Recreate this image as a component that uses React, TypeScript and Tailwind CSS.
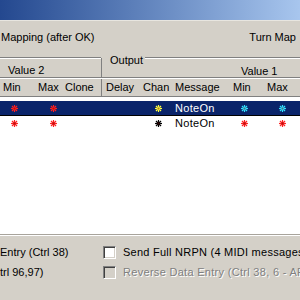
import React from "react";

const Star = ({ color, className = "" }: { color: string; className?: string }) => (
	<svg width="7" height="7" viewBox="0 0 7 7" className={className}>
		<g stroke={color} strokeWidth="1.2">
			<line x1="3.5" y1="0" x2="3.5" y2="7" />
			<line x1="0" y1="3.5" x2="7" y2="3.5" />
			<line x1="1" y1="1" x2="6" y2="6" />
			<line x1="6" y1="1" x2="1" y2="6" />
		</g>
		<rect x="2.5" y="2.5" width="2" height="2" fill="#600" opacity="0.5" />
	</svg>
);

const Etched = ({ className = "" }: { className?: string }) => (
	<div className={`h-[2px] border-t border-t-[#808080] border-b border-b-white ${className}`} />
);

const CheckBox = ({ disabled }: { disabled?: boolean }) => (
	<div
		className={`shrink-0 w-[13px] h-[13px] border-t border-l border-t-[#808080] border-l-[#808080] border-b border-r border-b-white border-r-white shadow-[inset_1px_1px_0_#404040,inset_-1px_-1px_0_#d4d0c8] ${
			disabled ? "bg-[#d4d0c8]" : "bg-white"
		}`}
	/>
);

const Row = ({ selected, chanColor, valColor }: { selected?: boolean; chanColor: string; valColor: string }) => (
	<div
		className={`flex items-center h-[14px] ${
			selected ? "bg-[#0a246a] text-white" : "text-black"
		}`}
	>
		<div className="w-[33px] flex">
			<Star color="#ff2020" className="ml-[11px]" />
		</div>
		<div className="w-[30px] flex">
			<Star color="#ff2020" className="ml-[17px]" />
		</div>
		<div className="w-[38px]" />
		<div className="w-[1px]" />
		<div className="w-[38px]" />
		<div className="w-[31px] flex">
			<Star color={chanColor} className="ml-[15px]" />
		</div>
		<div className="w-[57px] pl-[4px] leading-[14px] tracking-[0.3px]">NoteOn</div>
		<div className="w-[35px] flex">
			<Star color={valColor} className="ml-[13px]" />
		</div>
		<div className="w-[37px] flex">
			<Star color={valColor} className="ml-[16px]" />
		</div>
	</div>
);

export default function App() {
	return (
		<div className="w-[300px] h-[300px] overflow-hidden bg-[#d4d0c8] text-[11px] leading-[13px] text-black font-['Liberation_Sans',Arial,sans-serif] flex flex-col">
			{/* Title bar */}
			<div className="h-[20px] shrink-0 bg-gradient-to-r from-[#24488f] to-[#a8c6ee]" />
			<div className="h-[1px] bg-[#e8e6e0]" />

			{/* Options line */}
			<div className="flex justify-between items-start pt-[10px] h-[36px] shrink-0">
				<span className="pl-[1px]">Mapping (after OK)</span>
				<span className="pr-[4px]">Turn Map</span>
			</div>

			{/* Header row 1 */}
			<div className="flex h-[20px] shrink-0">
				<div className="w-[101px] flex flex-col">
					<Etched />
					<span className="pl-[8px] pt-[5px]">Value 2</span>
				</div>
				<div className="w-[1px] bg-[#808080] mt-[1px]" />
				<div className="flex-1 relative flex flex-col">
					<Etched className="ml-[43px]" />
					<span className="absolute left-[7px] top-[-3px] px-[1px]">Output</span>
					<span className="ml-[139px] pt-[6px]">Value 1</span>
				</div>
			</div>

			{/* Header row 2 */}
			<Etched />
			<div className="flex h-[17px] shrink-0 items-center">
				<div className="w-[33px] pl-[3px]">Min</div>
				<div className="w-[30px] pl-[5px]">Max</div>
				<div className="w-[38px] pl-[2px]">Clone</div>
				<div className="w-[1px] h-full bg-[#808080]" />
				<div className="w-[38px] pl-[4px]">Delay</div>
				<div className="w-[31px] pl-[3px]">Chan</div>
				<div className="w-[57px] pl-[4px]">Message</div>
				<div className="w-[35px] pl-[5px]">Min</div>
				<div className="w-[37px] pl-[4px]">Max</div>
			</div>
			<Etched />

			{/* List */}
			<div className="h-[136px] shrink-0 bg-white pt-[3px] flex flex-col">
				<div className="border-b border-black">
					<Row selected chanColor="#ffff40" valColor="#30e0ff" />
				</div>
				<Row chanColor="#000000" valColor="#ff2020" />
			</div>
			<div className="h-[1px] bg-[#a8a49c]" />
			<div className="h-[1px] bg-white" />

			{/* Bottom options */}
			<div className="flex flex-col gap-[7px] pt-[10px]">
				<div className="flex items-center h-[13px]">
					<span className="shrink-0 w-[103px]">Entry (Ctrl 38)</span>
					<CheckBox />
					<span className="ml-[7px] whitespace-nowrap tracking-[0.25px]">Send Full NRPN (4 MIDI messages)</span>
				</div>
				<div className="flex items-center h-[13px]">
					<span className="shrink-0 w-[103px]">trl 96,97)</span>
					<CheckBox disabled />
					<span className="ml-[7px] whitespace-nowrap tracking-[0.3px] text-[#808080] [text-shadow:1px_1px_0_#fff]">
						Reverse Data Entry (Ctrl 38, 6 - APPLY)
					</span>
				</div>
			</div>
		</div>
	);
}
